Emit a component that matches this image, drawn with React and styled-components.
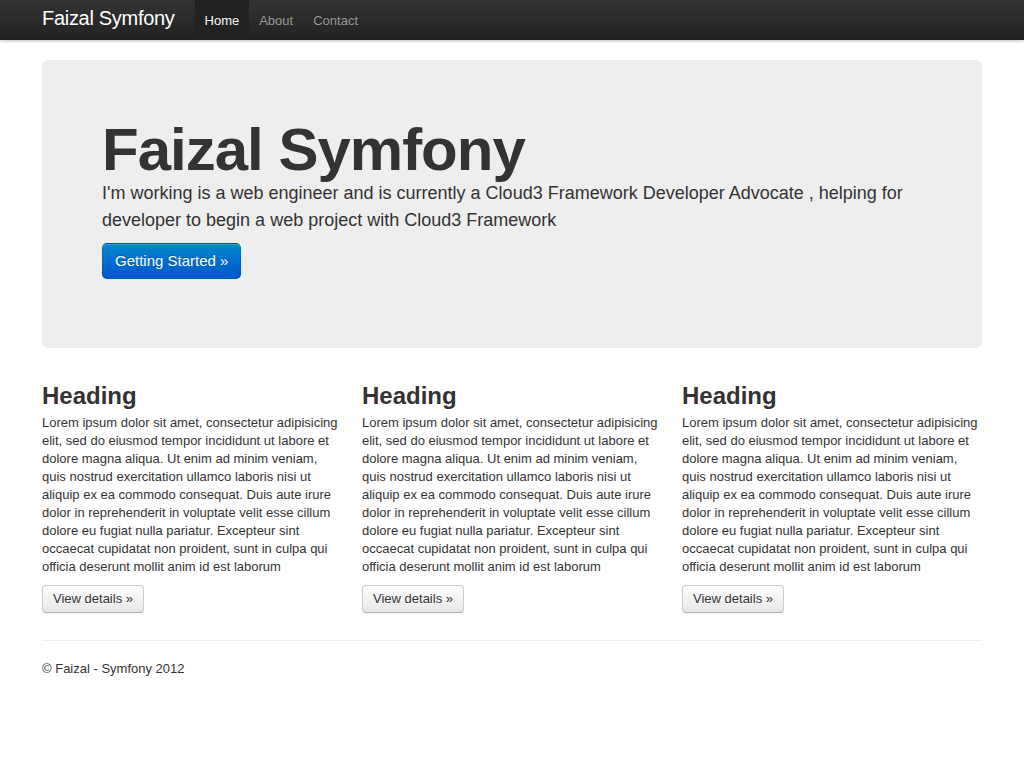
import React from 'react';
import styled, { createGlobalStyle } from 'styled-components';

const GlobalStyle = createGlobalStyle`
  html, body {
    margin: 0;
    padding: 0;
    background: #fff;
  }
  body {
    font-family: "Liberation Sans", Arial, Helvetica, sans-serif;
    font-size: 13px;
    line-height: 18px;
    color: #333;
  }
  * { box-sizing: border-box; }
`;

const Navbar = styled.div`
  height: 40px;
  background: linear-gradient(to bottom, #333333, #222222);
  box-shadow: 0 1px 3px rgba(0, 0, 0, 0.25), inset 0 -1px 0 rgba(0, 0, 0, 0.1);
`;

const Container = styled.div`
  width: 940px;
  margin: 0 auto;
`;

const NavInner = styled(Container)`
  display: flex;
  align-items: stretch;
  height: 40px;
`;

const Brand = styled.a`
  display: block;
  padding: 8px 20px 12px 0;
  font-size: 20px;
  line-height: 1;
  font-weight: 200;
  letter-spacing: -0.3px;
  color: #ffffff;
  text-decoration: none;
`;

const NavLink = styled.a`
  display: block;
  padding: 11px 10px 11px;
  font-size: 13px;
  line-height: 19px;
  text-decoration: none;
  color: ${p => (p.$active ? '#ffffff' : '#999999')};
  background: ${p => (p.$active ? '#222222' : 'transparent')};
  text-shadow: 0 -1px 0 rgba(0, 0, 0, 0.25);
`;

const Main = styled(Container)`
  padding-top: 20px;
`;

const Hero = styled.div`
  padding: 60px;
  margin-bottom: 30px;
  background: #eeeeee;
  border-radius: 6px;

  h1 {
    margin: 0;
    font-size: 60px;
    line-height: 1;
    letter-spacing: -1px;
    font-weight: bold;
    color: #333;
  }

  p {
    margin: 0 0 9px;
    font-size: 18px;
    line-height: 27px;
    font-weight: 200;
  }
`;

const Btn = styled.a`
  display: inline-block;
  vertical-align: top;
  padding: ${p => (p.$large ? '9px 12px' : '4px 10px')};
  font-size: ${p => (p.$large ? '15px' : '13px')};
  line-height: ${p => (p.$large ? '16px' : '18px')};
  border-radius: ${p => (p.$large ? '5px' : '4px')};
  text-decoration: none;
  cursor: pointer;
  color: ${p => (p.$primary ? '#fff' : '#333')};
  text-shadow: ${p =>
    p.$primary ? '0 -1px 0 rgba(0,0,0,0.25)' : '0 1px 1px rgba(255,255,255,0.75)'};
  background: ${p =>
    p.$primary
      ? 'linear-gradient(to bottom, #0088cc, #0055cc)'
      : 'linear-gradient(to bottom, #ffffff, #e6e6e6)'};
  border: 1px solid ${p => (p.$primary ? 'rgba(0,0,0,0.1)' : '#cccccc')};
  border-bottom-color: ${p => (p.$primary ? 'rgba(0,0,0,0.25)' : '#b3b3b3')};
  box-shadow: inset 0 1px 0 rgba(255, 255, 255, 0.2), 0 1px 2px rgba(0, 0, 0, 0.05);
`;

const ButtonLine = styled.div`
  margin: 0 0 9px;
  line-height: 0;
`;

const Row = styled.div`
  display: grid;
  grid-template-columns: repeat(3, 300px);
  column-gap: 20px;
`;

const Column = styled.div`
  h2 {
    margin: 0;
    font-size: 24px;
    line-height: 36px;
    font-weight: bold;
  }
  p {
    margin: 0 0 9px;
  }
`;

const Rule = styled.hr`
  margin: 18px 0;
  border: 0;
  border-top: 1px solid #eeeeee;
  border-bottom: 1px solid #ffffff;
`;

const Footer = styled.footer`
  p {
    margin: 0 0 9px;
  }
`;

const lorem =
  'Lorem ipsum dolor sit amet, consectetur adipisicing elit, sed do eiusmod tempor incididunt ut labore et dolore magna aliqua. Ut enim ad minim veniam, quis nostrud exercitation ullamco laboris nisi ut aliquip ex ea commodo consequat. Duis aute irure dolor in reprehenderit in voluptate velit esse cillum dolore eu fugiat nulla pariatur. Excepteur sint occaecat cupidatat non proident, sunt in culpa qui officia deserunt mollit anim id est laborum';

const columns = ['Heading', 'Heading', 'Heading'];

export default function App() {
  return (
    <>
      <GlobalStyle />
      <Navbar>
        <NavInner>
          <Brand href="#">Faizal Symfony</Brand>
          <NavLink href="#" $active>Home</NavLink>
          <NavLink href="#">About</NavLink>
          <NavLink href="#">Contact</NavLink>
        </NavInner>
      </Navbar>
      <Main>
        <Hero>
          <h1>Faizal Symfony</h1>
          <p>
            I'm working is a web engineer and is currently a Cloud3 Framework Developer Advocate ,
            helping for developer to begin a web project with Cloud3 Framework
          </p>
          <ButtonLine>
            <Btn $primary $large href="#">Getting Started &raquo;</Btn>
          </ButtonLine>
        </Hero>
        <Row>
          {columns.map((title, i) => (
            <Column key={i}>
              <h2>{title}</h2>
              <p>{lorem}</p>
              <ButtonLine>
                <Btn href="#">View details &raquo;</Btn>
              </ButtonLine>
            </Column>
          ))}
        </Row>
        <Rule />
        <Footer>
          <p>&copy; Faizal - Symfony 2012</p>
        </Footer>
      </Main>
    </>
  );
}
